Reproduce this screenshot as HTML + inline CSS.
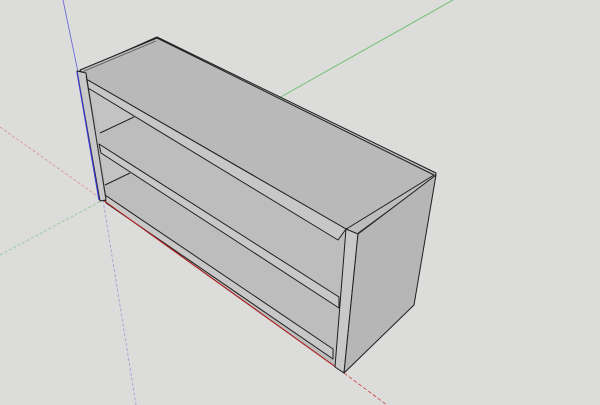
<!DOCTYPE html>
<html><head><style>
html,body{margin:0;padding:0;background:#dcdcdb;}
svg{display:block;}
</style></head><body>
<svg width="600" height="405" viewBox="0 0 600 405" xmlns="http://www.w3.org/2000/svg">
<rect width="600" height="405" fill="#dcdcdb"/>
<line x1="279" y1="98" x2="453" y2="0" stroke="#6cc06c" stroke-width="1"/>
<line x1="0" y1="255" x2="103" y2="200" stroke="#8fc88f" stroke-width="0.8" stroke-dasharray="3,2"/>
<line x1="0" y1="127" x2="103" y2="200" stroke="#d89090" stroke-width="0.8" stroke-dasharray="3,2"/>
<line x1="103" y1="200" x2="136" y2="405" stroke="#9a9ad8" stroke-width="0.8" stroke-dasharray="3,2"/>
<line x1="63" y1="0" x2="78" y2="72" stroke="#6060d8" stroke-width="0.8"/>
<line x1="344" y1="373" x2="387" y2="405" stroke="#d04040" stroke-width="0.8" stroke-dasharray="4,2"/>
<g stroke="#1e1e1e" stroke-width="1" stroke-linejoin="round">
<polygon points="78,72 157,37 436,173 413,305 344,373 103,200" fill="#bdbdbd"/>
<polygon points="88,88 136,116 100,133" fill="#c3c3c3" stroke="none"/>
<polygon points="101,152 134,171 105,185" fill="#c3c3c3" stroke="none"/>
<line x1="100" y1="133" x2="134" y2="117"/>
<line x1="105" y1="185" x2="130" y2="173"/>
<!-- top surface -->
<polygon points="80,70 157,38 434,175 348,228 346,229 86,79" fill="#b9b9b9"/>
<polyline points="82,72 156,41" fill="none" stroke="#555" stroke-width="0.8"/>
<polyline points="436,176 358,233" fill="none" stroke="#444" stroke-width="0.8"/>
<!-- top board front -->
<polygon points="86,79 346,229 338,240 88,88" fill="#c7c7c7"/>
<polygon points="99,144 339,297 339,308 101,153" fill="#c8c8c8"/>
<polygon points="105,195 333,349 333,359 106,203" fill="#c8c8c8"/>
<line x1="103" y1="200" x2="344" y2="373" stroke="#c02020" stroke-width="1"/>
<polygon points="77,71 86,73 106,200 100,201" fill="#c9c9c9"/>
<line x1="86" y1="76" x2="106" y2="198" stroke="#333" stroke-width="0.8"/>
<line x1="77" y1="72" x2="99" y2="200" stroke="#3a3ad0" stroke-width="1.2"/>
<polygon points="346,229 358,234 344,373 335,367" fill="#c8c8c8"/>
<polygon points="358,234 436,175 414,305 344,373" fill="#b6b6b6"/>
</g>
</svg>
</body></html>
